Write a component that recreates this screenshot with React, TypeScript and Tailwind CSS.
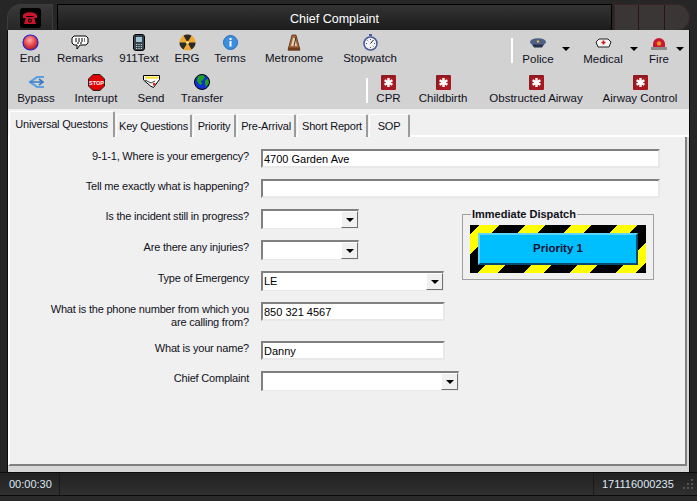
import type { ReactNode } from "react";

const END = (
  <svg width="17" height="17" viewBox="0 0 17 17">
    <defs>
      <radialGradient id="endBall" cx="0.45" cy="0.35" r="0.7">
        <stop offset="0" stopColor="#ffb0a8" />
        <stop offset="0.5" stopColor="#e8484c" />
        <stop offset="1" stopColor="#a01028" />
      </radialGradient>
    </defs>
    <circle cx="8.5" cy="8.5" r="7.5" fill="url(#endBall)" stroke="#2222cc" strokeWidth="1.2" />
  </svg>
);

const REMARKS = (
  <svg width="18" height="15" viewBox="0 0 18 15">
    <path d="M3 1h12l2 2v5l-2 2H9l-3 4v-4H3L1 8V3z" fill="#fff" stroke="#000" />
    <path d="M4 4h10M4 6h10M6 8h6" stroke="#000" strokeDasharray="2 1" />
  </svg>
);

const TEXT911 = (
  <svg width="12" height="17" viewBox="0 0 12 17">
    <rect x="0.5" y="0.5" width="11" height="16" rx="2.5" fill="#3a4650" stroke="#000" />
    <rect x="2.5" y="2.5" width="7" height="6" fill="#9fc4d8" stroke="#111" strokeWidth="0.6" />
    <path d="M3 10.5h6M3 12.5h6M3 14.5h6" stroke="#c8d0d4" strokeDasharray="1.2 1.2" />
  </svg>
);

const ERG = (
  <svg width="17" height="17" viewBox="0 0 17 17">
    <circle cx="8.5" cy="8.5" r="8" fill="#f0a830" />
    <path d="M8.5 8.5L4.5 1.6A8 8 0 0 1 12.5 1.6zM8.5 8.5L16.5 8.5A8 8 0 0 1 12.5 15.4zM8.5 8.5L4.5 15.4A8 8 0 0 1 .5 8.5z" fill="#2a2a2a" />
    <circle cx="8.5" cy="8.5" r="1.6" fill="#f6e08a" />
  </svg>
);

const TERMS = (
  <svg width="15" height="15" viewBox="0 0 15 15">
    <circle cx="7.5" cy="7.5" r="7" fill="#3c8ede" stroke="#2a6cb4" />
    <rect x="6.5" y="6" width="2" height="5.5" fill="#fff" />
    <rect x="6.5" y="3" width="2" height="2" fill="#fff" />
  </svg>
);

const METRONOME = (
  <svg width="14" height="17" viewBox="0 0 14 17">
    <path d="M5 1h4l4 15H1z" fill="#a8683c" stroke="#5c3418" strokeWidth="0.8" />
    <path d="M6 4h2l2 8H4z" fill="#e8d0a8" />
    <path d="M7 12L9 3" stroke="#333" />
    <rect x="1" y="13.5" width="12" height="3" fill="#6c3c1c" />
  </svg>
);

const STOPWATCH = (
  <svg width="15" height="17" viewBox="0 0 15 17">
    <rect x="6" y="0" width="3" height="2" fill="#4a5a9c" />
    <circle cx="7.5" cy="9.5" r="6.5" fill="#f4f4f8" stroke="#4a5a9c" strokeWidth="1.6" />
    <path d="M7.5 9.5L10.5 6" stroke="#222" />
    <path d="M7.5 5v1M12 9.5h-1M7.5 14v-1M3 9.5h1M4.5 6.5l.7.7M10.5 12.5l-.7-.7" stroke="#555" />
  </svg>
);

const POLICE = (
  <svg width="16" height="10" viewBox="0 0 16 10">
    <ellipse cx="8" cy="4" rx="8" ry="3.8" fill="#4e6088" />
    <path d="M2 6.5h12l-2 3H4z" fill="#26304a" />
    <circle cx="8" cy="3.5" r="1.2" fill="#d8b850" />
  </svg>
);

const MEDICAL = (
  <svg width="17" height="10" viewBox="0 0 17 10">
    <path d="M4 1h9l3 3-2 5H3L1 4z" fill="#f4f4f4" stroke="#222" />
    <path d="M8.5 2.5v4M6.5 4.5h4" stroke="#d01818" strokeWidth="1.6" />
  </svg>
);

const FIRE = (
  <svg width="16" height="13" viewBox="0 0 16 13">
    <path d="M2 10V7a6 6 0 0 1 12 0v3z" fill="#c81830" />
    <circle cx="8" cy="6.5" r="2.2" fill="#f09020" />
    <rect x="0" y="10" width="16" height="3" fill="#8c8c8c" />
  </svg>
);

const BYPASS = (
  <svg width="17" height="14" viewBox="0 0 17 14">
    <path d="M16 2H9L2 7l7 5h7" fill="none" stroke="#5ca0e0" strokeWidth="2.2" />
    <path d="M2 7h12M11 4l4 3-4 3" fill="none" stroke="#3c7cc4" strokeWidth="1.6" />
  </svg>
);

const STOP = (
  <svg width="17" height="17" viewBox="0 0 17 17">
    <path d="M5 .5h7L16.500 5v7L12 16.500H5L.5 12V5z" fill="#e00000" stroke="#222" />
    <text x="8.500" y="10.500" textAnchor="middle" fontSize="5.500" fontWeight="700" fill="#fff" fontFamily="Liberation Sans">STOP</text>
  </svg>
);

const SEND = (
  <svg width="17" height="14" viewBox="0 0 17 14">
    <path d="M.5 .5h16v4l-6 8-3-1.500L.5 5z" fill="#fff" stroke="#000" />
    <path d="M1.500 1.500h14v2L3 4z" fill="#f0e040" />
    <path d="M2 5l6 3 4-2" fill="none" stroke="#000" strokeWidth="0.8" />
    <rect x="10" y="8" width="2.500" height="2.500" fill="#e02020" />
  </svg>
);

const GLOBE = (
  <svg width="16" height="16" viewBox="0 0 16 16">
    <circle cx="8" cy="8" r="7.500" fill="#1030d0" stroke="#000" />
    <path d="M4 2l5-1 2 2-2 3-2 1 1 3-2 1-3-4zM11 6l3-1 1 4-3 4-1-3z" fill="#20a020" />
  </svg>
);

const MEDIC = (
  <svg width="15" height="15" viewBox="0 0 15 15">
    <rect width="15" height="15" rx="1" fill="#a81820" />
    <path d="M1 14V1h13" fill="none" stroke="#702028" />
    <path d="M7.500 3v9M3.600 5.200l7.800 4.600M11.400 5.200l-7.800 4.600" stroke="#fff" strokeWidth="2.400" />
  </svg>
);

function ToolItem({ icon, label, width }: { icon: ReactNode; label: string; width: string }) {
  return (
    <div className={`${width} flex flex-col items-center`}>
      <div className="flex h-[18px] items-center justify-center">{icon}</div>
      <span className="whitespace-nowrap text-[11.5px] leading-[14px] text-[#10101c]">{label}</span>
    </div>
  );
}

function Arrow({ className }: { className: string }) {
  return <span className={`h-0 w-0 border-x-[4px] border-t-[4px] border-x-transparent border-t-black ${className}`} />;
}

function Separator() {
  return <div className="h-[25px] w-[2px] bg-white" />;
}

function Tab({ label, width, active }: { label: string; width: string; active?: boolean }) {
  return (
    <div
      className={`${width} flex items-center justify-center border-l border-t border-r-2 border-l-white border-t-white border-r-[#9a9a9a] ${
        active ? "h-[26px]" : "mt-[3px] h-[23px]"
      } whitespace-nowrap rounded-t-[2px] bg-[#f0f0f0] text-[11px] tracking-[-0.2px] text-[#10101c]`}
    >
      {label}
    </div>
  );
}

function Label({ children }: { children: ReactNode }) {
  return <div className="w-[239px] text-right text-[11px] leading-[13px] tracking-[-0.2px] text-[#10101c]">{children}</div>;
}

function Field({ value, width }: { value?: string; width: string }) {
  return (
    <div className={`${width} h-[19px] border-2 border-b-[#e8e8e8] border-l-[#808080] border-r-[#e8e8e8] border-t-[#808080] bg-white pl-[1px] text-[11px] leading-[16px] text-black`}>
      {value}
    </div>
  );
}

function Select({ value, width }: { value?: string; width: string }) {
  return (
    <div className={`${width} flex h-[20px] items-stretch justify-between border-b border-l-2 border-r border-t-2 border-b-[#e8e8e8] border-l-[#808080] border-r-[#e8e8e8] border-t-[#808080] bg-white pl-[1px] text-[11px] leading-[17px] text-black`}>
      <span>{value}</span>
      <span className="flex w-[17px] items-center justify-center border border-b-[#707070] border-l-white border-r-[#707070] border-t-white bg-[#f0f0f0]">
        <span className="h-0 w-0 border-x-[4px] border-t-[4px] border-x-transparent border-t-black" />
      </span>
    </div>
  );
}

function Row({ label, height, children }: { label: ReactNode; height: string; children: ReactNode }) {
  return (
    <div className={`flex ${height} items-start`}>
      <div className="pt-[1px]">
        <Label>{label}</Label>
      </div>
      <div className="ml-[12px]">{children}</div>
    </div>
  );
}

export default function App() {
  return (
    <div className="flex h-[501px] w-[697px] flex-col overflow-hidden bg-[#262626] font-['Liberation_Sans',sans-serif]">
      {/* title bar */}
      <div className="flex h-[30px] shrink-0 items-stretch pl-[7px] pr-[7px] pt-[4px]">
        <div className="flex w-[46px] items-center justify-center rounded-tl-[14px] border border-b-0 border-[#3c3c3c] bg-gradient-to-b from-[#3a3a3a] to-[#262626]">
          <div className="flex h-[20px] w-[21px] items-center justify-center rounded-[3px] bg-black">
            <svg width="16" height="15" viewBox="0 0 16 15">
              <path d="M1 6C1 1 15 1 15 6v2h-3.500V6h-7v2H1z" fill="#c8142c" />
              <path d="M4 7h8l2 7H2z" fill="#c8142c" />
              <circle cx="8" cy="10.500" r="2" fill="#000" />
              <circle cx="8" cy="10.500" r="1" fill="#c8142c" />
            </svg>
          </div>
        </div>
        <div className="ml-[4px] flex flex-1 items-center justify-center border border-b-0 border-black bg-gradient-to-b from-[#343434] to-[#1c1c1c] pt-[3px] text-[12.5px] text-white">
          Chief Complaint
        </div>
        <div className="ml-[2px] flex w-[76px] rounded-r-[14px] border border-b-0 border-[#3c2424] bg-[#3a3636]">
          <div className="w-[24px] border-r border-[#2a1414]" />
          <div className="w-[26px] border-r border-[#2a1414]" />
          <div className="flex-1" />
        </div>
      </div>

      <div className="mx-[7px] flex flex-1 flex-col border-l border-r border-[#0c0c0c]">
        {/* toolbar */}
        <div className="flex h-[79px] shrink-0 flex-col bg-[#d2d2d2]">
          <div className="flex h-[39px] items-start pt-[3px]">
            <ToolItem icon={END} label="End" width="w-[44px]" />
            <ToolItem icon={REMARKS} label="Remarks" width="w-[56px]" />
            <ToolItem icon={TEXT911} label="911Text" width="w-[62px]" />
            <ToolItem icon={ERG} label="ERG" width="w-[34px]" />
            <ToolItem icon={TERMS} label="Terms" width="w-[52px]" />
            <ToolItem icon={METRONOME} label="Metronome" width="w-[76px]" />
            <ToolItem icon={STOPWATCH} label="Stopwatch" width="w-[76px]" />
            <div className="flex-1" />
            <div className="mt-[5px]">
              <Separator />
            </div>
            <div className="ml-[1px] mt-[1px] flex items-center">
              <ToolItem icon={POLICE} label="Police" width="w-[48px]" />
              <Arrow className="mb-[2px]" />
            </div>
            <div className="ml-[5px] mt-[1px] flex items-center">
              <ToolItem icon={MEDICAL} label="Medical" width="w-[56px]" />
              <Arrow className="mb-[2px] -ml-[1px]" />
            </div>
            <div className="ml-[1px] mt-[1px] flex items-center">
              <ToolItem icon={FIRE} label="Fire" width="w-[40px]" />
              <Arrow className="mb-[2px] -ml-[3px]" />
            </div>
            <div className="w-[5px]" />
          </div>
          <div className="flex h-[40px] items-start pt-[4px]">
            <ToolItem icon={BYPASS} label="Bypass" width="w-[56px]" />
            <ToolItem icon={STOP} label="Interrupt" width="w-[64px]" />
            <ToolItem icon={SEND} label="Send" width="w-[46px]" />
            <ToolItem icon={GLOBE} label="Transfer" width="w-[56px]" />
            <div className="flex-1" />
            <div className="mt-[5px]">
              <Separator />
            </div>
            <ToolItem icon={MEDIC} label="CPR" width="w-[41px]" />
            <ToolItem icon={MEDIC} label="Childbirth" width="w-[68px]" />
            <ToolItem icon={MEDIC} label="Obstructed Airway" width="w-[118px]" />
            <ToolItem icon={MEDIC} label="Airway Control" width="w-[90px]" />
            <div className="w-[4px]" />
          </div>
        </div>

        {/* tabs */}
        <div className="flex h-[28px] shrink-0 items-start gap-[1px] border-b-2 border-b-white bg-[#f0f0f0] pl-[1px] pt-[2px]">
          <Tab label="Universal Questons" width="w-[106px]" active />
          <Tab label="Key Questions" width="w-[76px]" />
          <Tab label="Priority" width="w-[43px]" />
          <Tab label="Pre-Arrival" width="w-[59px]" />
          <Tab label="Short Report" width="w-[71px]" />
          <Tab label="SOP" width="w-[41px]" />
        </div>

        {/* form */}
        <div className="flex flex-1 flex-col bg-[#d8d8d8] pb-[6px]">
          <div className="mr-[2px] flex flex-1 flex-col border-b-2 border-l-2 border-r-2 border-b-[#808080] border-l-white border-r-[#808080] bg-[#f0f0f0] pt-[12px]">
            <Row label="9-1-1, Where is your emergency?" height="h-[30px]">
              <Field value="4700 Garden Ave" width="w-[399px]" />
            </Row>
            <Row label="Tell me exactly what is happening?" height="h-[30px]">
              <Field width="w-[399px]" />
            </Row>
            <div className="flex">
              <div className="flex flex-col">
                <Row label="Is the incident still in progress?" height="h-[31px]">
                  <Select width="w-[98px]" />
                </Row>
                <Row label="Are there any injuries?" height="h-[31px]">
                  <Select width="w-[98px]" />
                </Row>
                <Row label="Type of Emergency" height="h-[31px]">
                  <Select value="LE" width="w-[183px]" />
                </Row>
                <Row
                  label={
                    <>
                      What is the phone number from which you
                      <br />
                      are calling from?
                    </>
                  }
                  height="h-[39px]"
                >
                  <Field value="850 321 4567" width="w-[184px]" />
                </Row>
                <Row label="What is your name?" height="h-[30px]">
                  <Field value="Danny" width="w-[184px]" />
                </Row>
                <Row label="Chief Complaint" height="h-[30px]">
                  <Select width="w-[198px]" />
                </Row>
              </div>
              <fieldset className="ml-[3px] mt-[-2px] h-[73px] w-[191px] self-start border border-[#a0a0a0] px-[7px] pt-[4px]">
                <legend className="ml-[1px] px-[1px] text-[11px] font-bold leading-[14px] text-[#10101c]">
                  Immediate Dispatch
                </legend>
                <div className="flex h-[48px] w-[176px] items-center justify-center bg-[repeating-linear-gradient(135deg,#000_0,#000_7px,#ffff00_7px,#ffff00_21px,#000_21px,#000_32.5px)]">
                  <div className="flex h-[32px] w-[160px] items-center justify-center border-2 border-b-[#0a4a6c] border-l-[#60d4ff] border-r-[#0a4a6c] border-t-[#60d4ff] bg-[#00bfff] text-[11.5px] font-bold text-[#101030]">
                    Priority 1
                  </div>
                </div>
              </fieldset>
            </div>
          </div>
        </div>
      </div>

      {/* status bar */}
      <div className="flex h-[24px] shrink-0 items-stretch border-y border-[#0c0c0c] bg-gradient-to-b from-[#222222] to-[#303030] text-[11px] text-[#dfe8f4]">
        <div className="flex w-[60px] items-center border-r border-[#1a1a1a] pl-[9px]">00:00:30</div>
        <div className="flex-1" />
        <div className="flex w-[104px] items-center justify-between border-l border-[#1a1a1a] pl-[8px] pr-[3px]">
          <span>171116000235</span>
          <svg width="12" height="12" viewBox="0 0 12 12" fill="#555">
            <rect x="9" y="1" width="2" height="2" />
            <rect x="5" y="5" width="2" height="2" />
            <rect x="9" y="5" width="2" height="2" />
            <rect x="1" y="9" width="2" height="2" />
            <rect x="5" y="9" width="2" height="2" />
            <rect x="9" y="9" width="2" height="2" />
          </svg>
        </div>
      </div>
      <div className="h-[5px] shrink-0 bg-[#2a2a2a]" />
    </div>
  );
}
